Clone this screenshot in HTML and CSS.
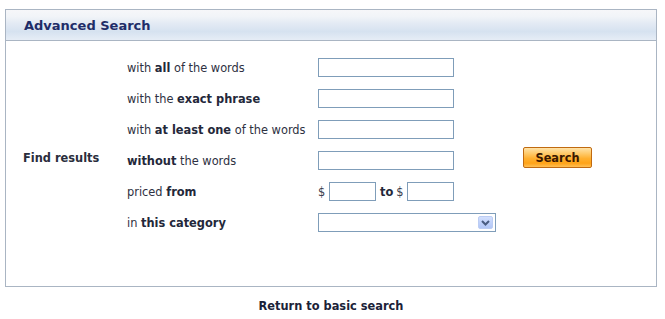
FILE: index.html
```html
<!DOCTYPE html>
<html>
<head>
<meta charset="utf-8">
<link rel="stylesheet" href="styles.css">
</head>
<body>
<div class="panel">
  <div class="panel-header"><h1 class="panel-title">Advanced Search</h1></div>
  <div class="panel-body">
    <div class="find">Find results</div>
    <div class="label">with <b>all</b> of the words</div>
    <div class="field"><input class="text" type="text"></div>
    <div class="label">with the <b>exact phrase</b></div>
    <div class="field"><input class="text" type="text"></div>
    <div class="label">with <b>at least one</b> of the words</div>
    <div class="field"><input class="text" type="text"></div>
    <div class="label"><b>without</b> the words</div>
    <div class="field"><input class="text" type="text"></div>
    <div class="label">priced <b>from</b></div>
    <div class="field price">
      <span class="cur">$</span><input class="text small" type="text"><b class="to">to</b><span class="cur">$</span><input class="text small" type="text">
    </div>
    <div class="label">in <b>this category</b></div>
    <div class="field">
      <div class="select">
        <span class="select-btn"><svg width="9" height="6" viewBox="0 0 9 6"><path d="M1 1 L4.5 4.5 L8 1" fill="none" stroke="#4a5d82" stroke-width="2"/></svg></span>
      </div>
    </div>
    <div class="action"><button class="btn-search" type="button">Search</button></div>
  </div>
</div>
<div class="footer"><a class="return" href="#">Return to basic search</a></div>
</body>
</html>
```
FILE: styles.css
```css
html, body { margin: 0; padding: 0; background: #fff; }
body {
  padding: 9px 8px 0 5px;
  font-family: "DejaVu Sans", Verdana, sans-serif;
  font-size: 11.4px;
  color: #2e3142;
}
.panel {
  width: 650px;
  border: 1px solid #aab5c3;
}
.panel-header {
  height: 30px;
  border-bottom: 1px solid #aab5c3;
  background: linear-gradient(to bottom, #f6f7f9 0%, #f1f4f8 22%, #e3eaf4 45%, #d6e2f0 72%, #e6edf6 100%);
  display: flex;
  align-items: center;
  padding-left: 18px;
}
.panel-title {
  margin: 0;
  font-size: 13px;
  font-weight: bold;
  color: #1f2d68;
}
.panel-body {
  display: grid;
  grid-template-columns: 104px 191px 205px 1fr;
  grid-auto-rows: 19px;
  row-gap: 12px;
  padding: 17px 0 54px 17px;
  align-items: center;
}
.find {
  grid-column: 1;
  grid-row: 4;
  font-weight: bold;
  color: #2a2d3c;
  margin-bottom: 5px;
}
.label { grid-column: 2; white-space: nowrap; }
.label b { color: #24283a; }
.field { grid-column: 3; display: flex; align-items: center; }
.action {
  grid-column: 4;
  grid-row: 4;
  margin-bottom: 6px;
}
.text {
  box-sizing: border-box;
  width: 136px;
  height: 19px;
  border: 1px solid #7f9db9;
  margin: 0;
  padding: 0 2px;
  background: #fff;
}
.text.small { width: 47px; }
.cur { width: 11px; color: #3a3d4c; }
.to { margin: 0 3px 0 4px; color: #24283a; }
.select {
  position: relative;
  box-sizing: border-box;
  width: 178px;
  height: 19px;
  border: 1px solid #7f9db9;
  background: #fff;
}
.select-btn {
  position: absolute;
  right: 2px;
  top: 2px;
  width: 15px;
  height: 13px;
  box-sizing: border-box;
  border: 1px solid #bccdf4;
  border-radius: 2px;
  background: linear-gradient(to bottom, #d4e0fd 0%, #c1d2fb 50%, #b2c7f6 100%);
  display: flex;
  align-items: center;
  justify-content: center;
}
.btn-search {
  box-sizing: border-box;
  width: 69px;
  height: 21px;
  margin: 0;
  padding: 0;
  border: 1px solid #c06a10;
  border-radius: 2px;
  background: linear-gradient(to bottom, #ffe3a8 0%, #ffc968 30%, #ffb030 55%, #ffa317 80%, #ffbf55 100%);
  font-family: "DejaVu Sans", Verdana, sans-serif;
  font-size: 11.4px;
  font-weight: bold;
  color: #3b1800;
}
.footer {
  width: 652px;
  text-align: center;
  margin-top: 12px;
}
.return {
  font-weight: bold;
  color: #1b2238;
  text-decoration: none;
}
```
